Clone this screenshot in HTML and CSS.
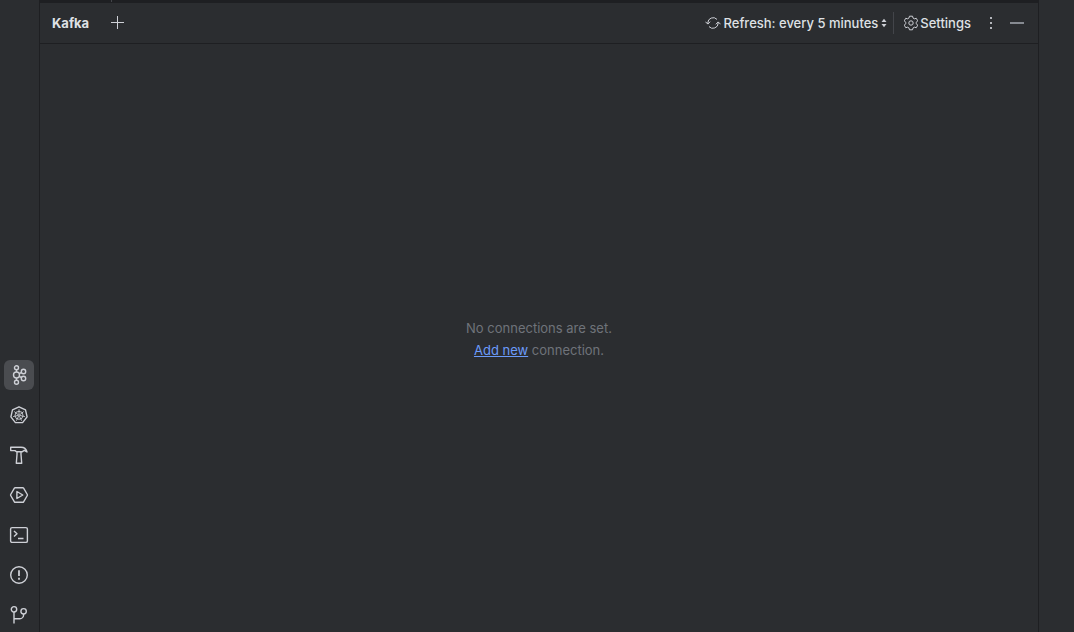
FILE: index.html
```html
<!DOCTYPE html>
<html lang="en">
<head>
<meta charset="utf-8">
<title>Kafka</title>
<link rel="stylesheet" href="styles.css">
</head>
<body>
<div class="app">
  <nav class="toolbar" aria-label="Tool windows">
    <button class="tool tool-active" aria-label="Kafka">
      <svg width="20" height="20" viewBox="0 0 20 20"><circle cx="7.500" cy="2.800" r="2"/><circle cx="7.500" cy="10" r="3"/><circle cx="7.500" cy="17.200" r="2"/><circle cx="14.500" cy="6.500" r="2.200"/><circle cx="14.500" cy="13.500" r="2.200"/><path d="M7.500 4.800V7M7.500 13v2.200M10.200 8.600l2.300-1.100M10.200 11.400l2.300 1.100"/></svg>
    </button>
    <button class="tool" aria-label="Services">
      <svg width="20" height="20" viewBox="0 0 20 20"><path d="M10 1.800 16.500 4.900 18.100 11.900 13.600 17.600H6.400L1.900 11.900 3.500 4.900Z"/><circle class="wheel" cx="10" cy="10.300" r="4"/><circle class="wheel" cx="10" cy="10.300" r=".8"/><path class="wheel" d="M10 9.300V4.300M10.800 9.700l3.900-3.100M11 10.500l4.900 1.100M10.400 11.200l2.200 4.500M9.600 11.200l-2.200 4.500M9 10.500l-4.900 1.100M9.200 9.700 5.300 6.600"/></svg>
    </button>
    <button class="tool" aria-label="Build">
      <svg width="20" height="20" viewBox="0 0 20 20"><path d="M1.700 2.200H12c2.800 0 5.200 1.500 6 4.800l-2.700-1.700-2.300 1.500H7.500L6 5.600H1.700ZM8 6.800h4v2.700l.7 8.700H7.300L8 9.500Z"/></svg>
    </button>
    <button class="tool" aria-label="Run">
      <svg width="20" height="20" viewBox="0 0 20 20"><path d="M6.300 2.700h7.400a1 1 0 0 1 .9.500l3.700 6.300a1 1 0 0 1 0 1l-3.700 6.300a1 1 0 0 1-.9.500H6.300a1 1 0 0 1-.9-.5L1.700 10.500a1 1 0 0 1 0-1L5.400 3.200a1 1 0 0 1 .9-.5Z"/><path d="M7.900 6.500v7l5.900-3.500Z"/></svg>
    </button>
    <button class="tool" aria-label="Terminal">
      <svg width="20" height="20" viewBox="0 0 20 20"><rect x="1.600" y="2.600" width="16.800" height="14.800" rx="1.500"/><path d="m5 6 3 2.800-3 2.800M9 13.500h5.500"/></svg>
    </button>
    <button class="tool" aria-label="Problems">
      <svg width="20" height="20" viewBox="0 0 20 20"><circle cx="10" cy="10" r="8.300"/><path class="bold" d="M10 5.200v5.800M10 12.800v2"/></svg>
    </button>
    <button class="tool" aria-label="Version control">
      <svg width="20" height="20" viewBox="0 0 20 20"><circle cx="5" cy="4.300" r="2.700"/><circle cx="14.600" cy="6.300" r="2.700"/><path d="M5 7v11.500M5 13.700h5.800a3.800 3.800 0 0 0 3.800-3.800V9"/></svg>
    </button>
  </nav>
  <main class="panel">
    <div class="splitter"></div>
    <header class="header">
      <h1 class="title">Kafka</h1>
      <button class="icon-button add" aria-label="Add connection">
        <svg width="14" height="16" viewBox="0 0 14 16"><path d="M7.500 1v13M1 7.500h13"/></svg>
      </button>
      <div class="actions">
        <button class="action refresh">
          <svg width="16" height="16" viewBox="0 0 16 16"><path d="M2.800 9V8A5.300 5.300 0 0 1 12 4.400M13.200 7v1A5.300 5.300 0 0 1 4 11.600M.4 6.700l2.400 2.400 2.400-2.400M10.800 9.300l2.400-2.400 2.400 2.400"/></svg>
          <span>Refresh: every 5 minutes</span>
          <svg class="arrows" width="6" height="10" viewBox="0 0 6 10"><path d="M3 .8 5.500 4h-5ZM3 9.200.5 6h5Z"/></svg>
        </button>
        <span class="divider"></span>
        <button class="action settings">
          <svg width="14" height="16" viewBox="0 0 14 16"><path d="M5.500 1.200h3l.6 1.900 1.200.7 2-.5 1.400 2.500-1.400 1.500v1.400l1.400 1.500-1.400 2.500-2-.5-1.200.7-.6 1.900h-3l-.6-1.900-1.200-.7-2 .5L.3 10.200l1.400-1.500V7.300L.3 5.800l1.400-2.500 2 .5 1.200-.7Z"/><circle cx="7" cy="8" r="2.200"/></svg>
          <span>Settings</span>
        </button>
        <button class="icon-button more" aria-label="More options">
          <svg class="filled" width="16" height="16" viewBox="0 0 16 16"><path d="M7 2h2v2H7ZM7 7h2v2H7ZM7 12h2v2H7Z"/></svg>
        </button>
        <button class="icon-button hide" aria-label="Hide">
          <svg width="14" height="16" viewBox="0 0 14 16"><path d="M0 8h14"/></svg>
        </button>
      </div>
    </header>
    <section class="empty">
      <p class="line">No connections are set.</p>
      <p class="line"><a class="link" href="#">Add new</a> connection.</p>
    </section>
  </main>
  <aside class="rail"></aside>
</div>
</body>
</html>
```
FILE: styles.css
```css
* {
  box-sizing: border-box;
}

body {
  margin: 0;
  background: #2b2d30;
  color: #dfe1e5;
  font-family: Inter, "Liberation Sans", sans-serif;
  font-size: 13px;
  line-height: 22px;
}

button {
  display: flex;
  align-items: center;
  justify-content: center;
  margin: 0;
  padding: 0;
  border: 0;
  background: none;
  color: inherit;
  font: inherit;
}

svg {
  display: block;
  flex: none;
  fill: none;
  stroke: #ced0d6;
  stroke-width: 1;
}

.app {
  display: flex;
  min-height: 100vh;
}

.toolbar {
  display: flex;
  flex-direction: column;
  justify-content: flex-end;
  gap: 10px;
  width: 40px;
  padding: 0 5px 2px 4px;
  border-right: 1px solid #1e1f22;
}

.tool {
  width: 30px;
  height: 30px;
  border-radius: 6px;
}

.tool svg {
  stroke-width: 1.4;
  stroke-linejoin: round;
}

.tool .wheel {
  stroke-width: 0.9;
}

.tool .bold {
  stroke-width: 1.8;
}

.tool-active {
  background: #4a4c50;
}

.panel {
  display: flex;
  flex: 1;
  flex-direction: column;
}

.splitter {
  height: 3px;
  padding-left: 71px;
  background: #1e1f22;
}

.splitter::before {
  content: "";
  display: block;
  width: 1px;
  height: 2px;
  background: #43454a;
}

.header {
  display: flex;
  align-items: center;
  height: 41px;
  padding: 0 14px 0 12px;
  border-bottom: 1px solid #1e1f22;
}

.title {
  margin: 0;
  font-size: 13px;
  font-weight: 700;
}

.add {
  margin-left: 21px;
}

.actions {
  display: flex;
  align-items: center;
  margin-left: auto;
}

.action {
  gap: 3px;
  font-weight: 500;
  white-space: nowrap;
}

.arrows,
.filled {
  fill: #ced0d6;
  stroke: none;
}

.divider {
  width: 1px;
  height: 22px;
  margin: 0 10px 0 6px;
  background: #43454a;
}

.settings {
  gap: 2px;
}

.more {
  margin-left: 12px;
}

.more svg {
  fill: #b4b6bb;
}

.hide {
  margin-left: 11px;
}

.hide svg {
  stroke: #868a91;
  stroke-width: 2;
}

.empty {
  display: flex;
  flex: 1;
  flex-direction: column;
  align-items: center;
  justify-content: center;
  padding-top: 2px;
  color: #6f737a;
}

.line {
  margin: 0;
}

.link {
  color: #6b9bfa;
}

.rail {
  width: 36px;
  border-left: 1px solid #1e1f22;
}
```
